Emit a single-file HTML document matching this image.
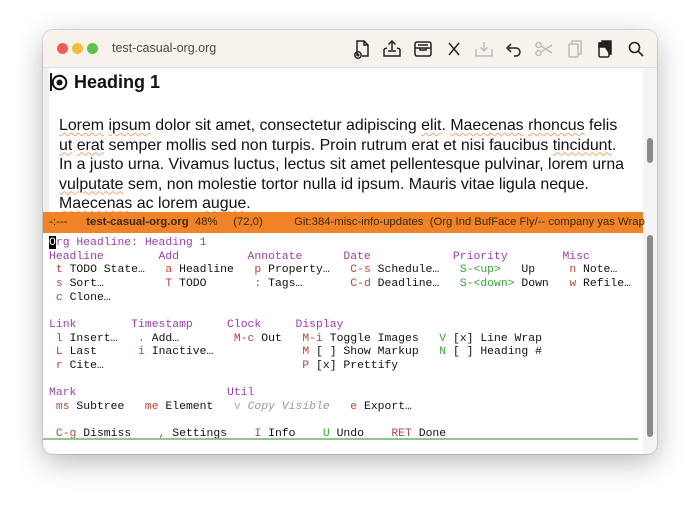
<!DOCTYPE html>
<html><head><meta charset="utf-8"><style>
*{margin:0;padding:0;box-sizing:border-box}
body{width:700px;height:511px;background:#fff;position:relative;overflow:hidden;font-family:"Liberation Sans",sans-serif}
.win{position:absolute;left:43px;top:30px;width:614px;height:424px;border-radius:10px;background:#fff;box-shadow:0 8px 28px rgba(0,0,0,.28),0 0 0 1px rgba(0,0,0,.12);overflow:hidden}
.tb{position:absolute;left:0;top:0;width:100%;height:38px;background:#f7f3ec;border-bottom:1px solid #e2ded6}
.dot{position:absolute;top:13px;width:11px;height:11px;border-radius:50%}
.title{position:absolute;left:69px;top:11px;font-size:12.5px;color:#4a4a4a}
.ic{position:absolute;top:9px}
.fringe{position:absolute;left:0;top:38px;width:6px;height:144px;background:#eeeeee}
.gut{position:absolute;left:600px;top:38px;width:14px;height:386px;background:#f4f4f4}
.thumb{position:absolute;left:604px;width:6px;border-radius:3px;background:#8a8a8a}
.h1{position:absolute;left:31px;top:42px;font-size:18px;font-weight:bold;color:#111}
.body{position:absolute;left:16px;top:86px;font-size:15.9px;line-height:19.5px;color:#111;width:590px;white-space:nowrap}
.sp{text-decoration:underline wavy #f0a870;text-decoration-thickness:1px;text-underline-offset:2px}
.ml{position:absolute;left:0;top:182px;width:600px;height:21px;background:#f08227;font-size:11.3px;color:#3a2a10;line-height:21px;white-space:pre}
pre{position:absolute;left:6px;top:206px;font-family:"Liberation Mono",monospace;font-size:11.42px;line-height:13.67px;color:#111}
.p{color:#9b3eaa}.r{color:#b8463c}.g{color:#3aa33a}.gr{color:#aaa}.i{color:#999;font-style:italic}
.cur{background:#000;color:#fff}
.gl{position:absolute;left:0;top:408px;width:595px;height:1.5px;background:#8cc88c}
</style></head><body>
<div class="win">
 <div class="tb">
  <div class="dot" style="left:14px;background:#ed5f57"></div>
  <div class="dot" style="left:29px;background:#f4be3a"></div>
  <div class="dot" style="left:44px;background:#5fc04c"></div>
  <div class="title">test-casual-org.org</div>
  <svg class="ic" style="left:310px" width="18" height="20" viewBox="0 0 18 20" fill="none" stroke="#222" stroke-width="1.5"><path d="M4 17V2h7l4 4v11H9M11 2v4h4"/><circle cx="5" cy="16" r="3.2"/><path d="M5 14.5v3M3.5 16h3"/></svg>
  <svg class="ic" style="left:339px" width="20" height="20" viewBox="0 0 20 20" fill="none" stroke="#222" stroke-width="1.5"><path d="M2 10v7h16v-7M10 2v9M6.5 5.5L10 2l3.5 3.5M2 10l3-1M18 10l-3-1"/><path d="M6 12h8"/></svg>
  <svg class="ic" style="left:370px" width="20" height="20" viewBox="0 0 20 20" fill="none" stroke="#222" stroke-width="1.5"><rect x="2" y="3" width="16" height="14" rx="2"/><path d="M2 9h16M7 9v2h6V9M5 6h10"/></svg>
  <svg class="ic" style="left:403px" width="16" height="20" viewBox="0 0 16 20" fill="none" stroke="#222" stroke-width="1.5"><path d="M3 4l10 12M13 4L3 16"/></svg>
  <svg class="ic" style="left:431px" width="20" height="20" viewBox="0 0 20 20" fill="none" stroke="#bbb" stroke-width="1.5"><path d="M2 10v7h16v-7M10 3v9M6.5 8.5L10 12l3.5-3.5"/></svg>
  <svg class="ic" style="left:462px" width="18" height="20" viewBox="0 0 18 20" fill="none" stroke="#222" stroke-width="1.5"><path d="M6 5L2 9l4 4M2 9h9a4 4 0 0 1 0 8H9"/></svg>
  <svg class="ic" style="left:491px" width="20" height="20" viewBox="0 0 20 20" fill="none" stroke="#bbb" stroke-width="1.5"><circle cx="4.5" cy="6" r="2.5"/><circle cx="4.5" cy="14" r="2.5"/><path d="M7 7l11 7M7 13l11-7"/></svg>
  <svg class="ic" style="left:524px" width="16" height="20" viewBox="0 0 16 20" fill="none" stroke="#bbb" stroke-width="1.5"><rect x="2" y="5" width="9" height="13" rx="1"/><path d="M5 5V2h9v13h-3"/></svg>
  <svg class="ic" style="left:554px" width="16" height="20" viewBox="0 0 16 20" fill="none" stroke="#222" stroke-width="1.5"><rect x="2" y="4" width="10" height="14" rx="1.5"/><path d="M5 4V2h9v13h-2" fill="#222"/><rect x="2" y="4" width="10" height="4" fill="#222"/></svg>
  <svg class="ic" style="left:584px" width="18" height="20" viewBox="0 0 18 20" fill="none" stroke="#222" stroke-width="1.6"><circle cx="7.5" cy="8.5" r="5"/><path d="M11.2 12.2L16 17"/></svg>
 </div>
 <div class="fringe"></div>
 <div class="gut"></div>
 <div class="thumb" style="top:108px;height:25px"></div>
 <div class="thumb" style="top:205px;height:202px"></div>
 <div style="position:absolute;left:7px;top:43px;width:1.5px;height:18px;background:#111"></div>
 <svg style="position:absolute;left:8px;top:44px" width="17" height="17" viewBox="0 0 17 17"><circle cx="8.5" cy="8.5" r="6.8" fill="none" stroke="#111" stroke-width="2"/><circle cx="8.5" cy="8.5" r="3" fill="#111"/></svg>
 <div class="h1">Heading 1</div>
 <div class="body"><span class="sp">Lorem</span> <span class="sp">ipsum</span> dolor sit amet, consectetur adipiscing <span class="sp">elit</span>. <span class="sp">Maecenas</span> <span class="sp">rhoncus</span> felis<br><span class="sp">ut</span> <span class="sp">erat</span> semper mollis sed non turpis. Proin rutrum erat et nisi faucibus <span class="sp">tincidunt</span>.<br>In a justo urna. Vivamus luctus, lectus sit amet pellentesque pulvinar, lorem urna<br><span class="sp">vulputate</span> sem, non molestie tortor nulla id ipsum. Mauris vitae ligula neque.<br><span class="sp">Maecenas</span> ac lorem <span class="sp">augue</span>.</div>
 <div class="ml">  -:---      <b>test-casual-org.org</b>  48%     (72,0)          Git:384-misc-info-updates  (Org Ind BufFace Fly/-- company yas Wrap</div>
<pre><span class="cur">O</span><span class="p">rg Headline: Heading 1</span>
<span class="p">Headline</span>        <span class="p">Add</span>          <span class="p">Annotate</span>      <span class="p">Date</span>            <span class="p">Priority</span>        <span class="p">Misc</span>
 <span class="r">t</span> TODO State…   <span class="r">a</span> Headline   <span class="r">p</span> Property…   <span class="r">C-s</span> Schedule…   <span class="g">S-&lt;up&gt;</span>   Up     <span class="r">n</span> Note…
 <span class="r">s</span> Sort…         <span class="r">T</span> TODO       <span class="r">:</span> Tags…       <span class="r">C-d</span> Deadline…   <span class="g">S-&lt;down&gt;</span> Down   <span class="r">w</span> Refile…
 <span class="r">c</span> Clone…

<span class="p">Link</span>        <span class="p">Timestamp</span>     <span class="p">Clock</span>     <span class="p">Display</span>
 <span class="r">l</span> Insert…   <span class="r">.</span> Add…        <span class="r">M-c</span> Out   <span class="r">M-i</span> Toggle Images   <span class="g">V</span> [x] Line Wrap
 <span class="r">L</span> Last      <span class="r">i</span> Inactive…             <span class="r">M</span> [ ] Show Markup   <span class="g">N</span> [ ] Heading #
 <span class="r">r</span> Cite…                             <span class="r">P</span> [x] Prettify

<span class="p">Mark</span>                      <span class="p">Util</span>
 <span class="r">ms</span> Subtree   <span class="r">me</span> Element   <span class="gr">v</span> <span class="i">Copy Visible</span>   <span class="r">e</span> Export…

 <span class="r">C-g</span> Dismiss    <span class="r">,</span> Settings    <span class="r">I</span> Info    <span class="g">U</span> Undo    <span class="r">RET</span> Done</pre>
 <div class="gl"></div>
</div>
</body></html>
